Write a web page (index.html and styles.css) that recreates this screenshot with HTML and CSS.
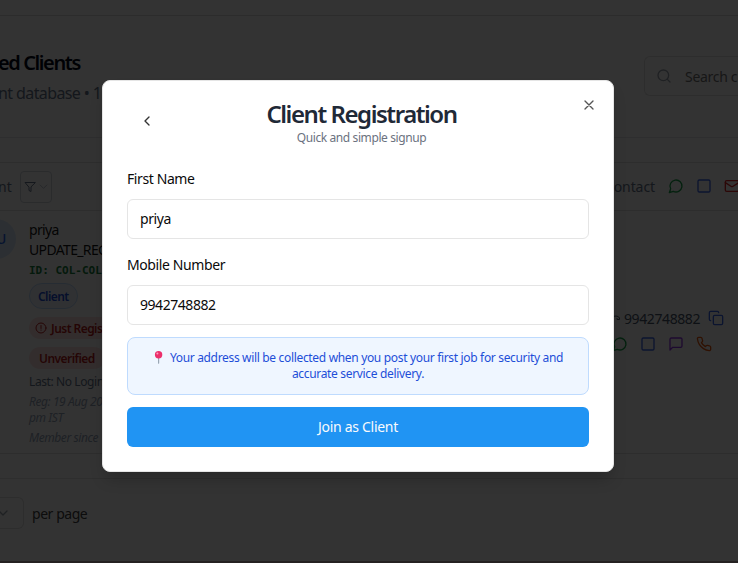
FILE: index.html
```html
<!DOCTYPE html>
<html lang="en">
<head>
<meta charset="utf-8">
<title>Client Registration</title>
<link rel="stylesheet" href="styles.css">
</head>
<body>
<div class="page">
  <div class="topbar"></div>
  <header class="page-head">
    <div class="heading">
      <h1>ed Clients</h1>
      <p>nt database • 1</p>
    </div>
    <div class="search">
      <svg width="16" height="16" viewBox="0 0 24 24"><circle cx="11" cy="11" r="8"/><path d="m21 21-4.3-4.3"/></svg>
      <span>Search cl</span>
    </div>
  </header>
  <div class="gap"></div>
  <div class="table-head">
    <span class="col-client">nt</span>
    <div class="filter">
      <svg width="12" height="12" viewBox="0 0 24 24"><path d="M22 3H2l8 9.46V19l4 2v-8.54z"/></svg>
      <svg class="faint" width="9" height="9" viewBox="0 0 24 24"><path d="m3 8 9 9 9-9"/></svg>
    </div>
    <div class="head-contact">
      <span>Contact</span>
      <svg class="green" width="16" height="16" viewBox="0 0 24 24"><path d="M7.9 20A9 9 0 1 0 4 16.1L2 22Z"/></svg>
      <svg class="blue" width="16" height="16" viewBox="0 0 24 24"><rect x="3" y="3" width="18" height="18" rx="2"/></svg>
      <svg class="red" width="16" height="16" viewBox="0 0 24 24"><rect x="2" y="4" width="20" height="16" rx="2"/><path d="m22 7-8.97 5.7a1.94 1.94 0 0 1-2.06 0L2 7"/></svg>
    </div>
  </div>
  <div class="row">
    <div class="avatar">U</div>
    <div class="client">
      <div class="name">priya</div>
      <div class="name">UPDATE_REG</div>
      <div class="cid">ID: COL-COL</div>
      <span class="tag tag-blue">Client</span>
      <span class="tag tag-red"><svg width="12" height="12" viewBox="0 0 24 24"><circle cx="12" cy="12" r="10"/><path d="M12 7v6M12 16v.5"/></svg>Just Registered</span>
      <span class="tag tag-red tag-wide">Unverified</span>
      <div class="last">Last: No Login</div>
      <div class="reg">Reg: 19 Aug 2025<br>pm IST</div>
      <div class="member">Member since</div>
    </div>
    <div class="contact">
      <div class="phone">
        <svg class="handset" width="9" height="8" viewBox="0 0 9 8"><path d="M1 2.5q5-1.500 6.500 1.500v1.500H5V4.500"/></svg>
        <span>9942748882</span>
        <svg class="blue strong" width="16" height="16" viewBox="0 0 24 24"><rect x="8" y="8" width="14" height="14" rx="2"/><path d="M4 16c-1.1 0-2-.9-2-2V4c0-1.1.9-2 2-2h10c1.1 0 2 .9 2 2"/></svg>
      </div>
      <div class="actions">
        <svg class="green" width="16" height="16" viewBox="0 0 24 24"><path d="M7.9 20A9 9 0 1 0 4 16.1L2 22Z"/></svg>
        <svg class="blue" width="16" height="16" viewBox="0 0 24 24"><rect x="3" y="3" width="18" height="18" rx="2"/></svg>
        <svg class="purple" width="16" height="16" viewBox="0 0 24 24"><path d="M21 15a2 2 0 0 1-2 2H7l-4 4V5a2 2 0 0 1 2-2h14a2 2 0 0 1 2 2z"/></svg>
        <svg class="orange" width="16" height="16" viewBox="0 0 24 24"><path d="M22 16.92v3a2 2 0 0 1-2.18 2 19.79 19.79 0 0 1-8.63-3.07 19.5 19.5 0 0 1-6-6 19.79 19.79 0 0 1-3.07-8.67A2 2 0 0 1 4.11 2h3a2 2 0 0 1 2 1.72c.13.96.36 1.9.7 2.81a2 2 0 0 1-.45 2.11L8.09 9.91a16 16 0 0 0 6 6l1.27-1.27a2 2 0 0 1 2.11-.45c.91.34 1.85.57 2.81.7A2 2 0 0 1 22 16.92z"/></svg>
      </div>
    </div>
  </div>
  <div class="gap"></div>
  <div class="pager">
    <div class="select"><svg width="16" height="16" viewBox="0 0 24 24"><path d="m6 9 6 6 6-6"/></svg></div>
    <span>per page</span>
  </div>
</div>

<div class="overlay">
  <div class="modal">
    <button class="back" aria-label="Back"><svg width="16" height="16" viewBox="0 0 24 24"><path d="m15 18-6-6 6-6"/></svg></button>
    <button class="close" aria-label="Close"><svg width="16" height="16" viewBox="0 0 24 24"><path d="M18 6 6 18M6 6l12 12"/></svg></button>
    <h2><span>Client Registration</span></h2>
    <p class="sub"><span>Quick and simple signup</span></p>
    <label class="label-first">First Name</label>
    <div class="field">priya</div>
    <label class="label-mobile">Mobile Number</label>
    <div class="field number">9942748882</div>
    <div class="note">
      <div><svg class="pin" width="11" height="13" viewBox="0 0 11 13"><path d="M5 6h1.2v6.2L5.6 13 5 12.2z" fill="#9aa7b4"/><circle cx="5.6" cy="3.8" r="3.7" fill="#ec2f6b"/><circle cx="4.4" cy="2.5" r="1" fill="#ff9fc0"/></svg><span>Your address will be collected when you post your first job for security and</span></div>
      <div>accurate service delivery.</div>
    </div>
    <button class="join"><span>Join as Client</span></button>
  </div>
</div>
</body>
</html>
```
FILE: styles.css
```css
* { box-sizing: border-box; }
body {
  margin: 0;
  width: 738px;
  height: 563px;
  overflow: hidden;
  font-family: "Noto Sans", "Open Sans", sans-serif;
  font-size: 14px;
  color: #0a0a0a;
}
h1, h2, p { margin: 0; }
button { font: inherit; border: 0; background: none; padding: 0; }
svg { fill: none; stroke: currentColor; stroke-width: 2; stroke-linecap: round; stroke-linejoin: round; flex: none; }

.page { width: 738px; height: 563px; overflow: hidden; background: #fff; white-space: nowrap; border-bottom: 2px solid #b9a9a9; }
.topbar { height: 16px; border-bottom: 1px solid #dcdcdc; }
.page-head { height: 122px; border-bottom: 1px solid #e5e7eb; display: flex; justify-content: space-between; }
.heading { padding-top: 33px; margin-left: -2px; }
.heading h1 { font-size: 20px; line-height: 28px; font-weight: 600; letter-spacing: -1.4px; color: #020817; }
.heading p { font-size: 16px; line-height: 24px; margin-top: 4px; letter-spacing: -0.6px; color: #64748b; }
.search { flex: none; width: 94px; height: 40px; margin-top: 40px; border: 1px solid #e0e0e0; border-right: 0; border-radius: 6px 0 0 6px; padding-left: 11px; display: flex; align-items: center; gap: 13px; color: #737373; letter-spacing: -0.3px; overflow: hidden; }
.search svg { color: #9ca3af; }
.gap { height: 24px; }
.table-head { height: 49px; border-top: 1px solid #dedede; border-bottom: 1px solid #dedede; display: flex; align-items: center; color: #64748b; }
.col-client { width: 20px; flex: none; margin-left: -2px; margin-right: 2px; }
.filter { flex: none; width: 32px; height: 32px; border: 1px solid #cfd4dc; border-radius: 4px; display: flex; align-items: center; justify-content: center; gap: 3px; }
.filter .faint { opacity: .55; }
.head-contact { flex: none; margin-left: 553px; padding-bottom: 1px; display: flex; align-items: center; gap: 12px; }
.head-contact span { width: 51px; letter-spacing: -0.1px; }
.green { color: #16a34a; }
.blue { color: #3b64e8; }
.red { color: #dc2626; }
.purple { color: #9333ea; }
.orange { color: #ea580c; }

.row { height: 243px; border-bottom: 1px solid #dedede; display: flex; }
.avatar { flex: none; width: 40px; height: 40px; margin: 8px 13px 0 -24px; border-radius: 50%; background: #dbeafe; color: #2563eb; font-weight: 500; line-height: 40px; padding-left: 20px; }
.client { flex: none; width: 584px; padding-top: 9px; display: flex; flex-direction: column; align-items: flex-start; }
.name { line-height: 20px; letter-spacing: -0.65px; color: #171717; }
.cid { font: bold 11px/20px "DejaVu Sans Mono", monospace; padding-top: 1px; color: #15803d; }
.tag { display: flex; align-items: center; gap: 4px; font-size: 12px; font-weight: 600; letter-spacing: -0.55px; border-radius: 13px; }
.tag-blue { height: 26px; margin-top: 2px; padding: 0 8px; border: 1px solid #bfdbfe; background: #eff6ff; color: #1d4ed8; }
.tag-red { height: 22px; margin-top: 8px; padding: 0 6px; background: #fee2e2; color: #b91c1c; }
.tag-wide { padding: 0 10px; }
.last { font-size: 12px; line-height: 16px; margin-top: 5px; letter-spacing: -0.4px; color: #64748b; }
.reg, .member { font-size: 12px; line-height: 16px; font-style: italic; letter-spacing: -0.42px; color: #94a3b8; }
.reg { margin-top: 4px; }
.member { margin-top: 4px; }
.contact { padding-top: 97px; margin-left: -1px; }
.phone { display: flex; align-items: center; height: 20px; color: #475569; }
.phone span { width: 84px; letter-spacing: -0.4px; }
.handset { margin-right: 3px; stroke-width: 1; }
.actions { display: flex; gap: 12px; margin-top: 8px; }
.pager { border-top: 1px solid #e5e5e5; padding-top: 18px; display: flex; align-items: center; gap: 9px; color: #404040; letter-spacing: -0.45px; }
.select { width: 24px; height: 32px; border: 1px solid #dedede; border-left: 0; border-radius: 0 6px 6px 0; display: flex; align-items: center; color: #9ca3af; margin-right: -1px; }
.select svg { margin-left: -5px; }

.overlay { position: absolute; inset: 0; background: rgba(0, 0, 0, .8); }
.modal { position: absolute; left: 102px; top: 80px; width: 512px; height: 392px; padding: 19px 24px 24px; background: #fff; border: 1px solid #e5e5e5; border-radius: 8px; box-shadow: 0 10px 15px -3px rgba(0, 0, 0, .2); display: flex; flex-direction: column; white-space: nowrap; }
.back, .close { position: absolute; width: 16px; height: 16px; display: flex; color: #333; }
.back { left: 36px; top: 32px; }
.close { right: 16px; top: 16px; color: #555; }
.modal h2 { height: 30px; line-height: 28px; font-size: 24px; font-weight: 600; letter-spacing: -1.45px; color: #1f2937; display: flex; justify-content: center; padding-left: 7px; }
.sub { height: 16px; line-height: 16px; font-size: 12px; color: #6b7280; letter-spacing: -0.4px; display: flex; justify-content: center; padding-left: 7px; }
.modal label { line-height: 20px; letter-spacing: -0.4px; }
.label-first { margin-top: 23px; }
.label-mobile { margin-top: 16px; }
.field { flex: none; height: 40px; margin-top: 10px; border: 1px solid #e5e5e5; border-radius: 6px; padding: 0 12px; line-height: 38px; letter-spacing: -0.4px; }
.number { letter-spacing: -0.45px; }
.note { height: 58px; margin-top: 12px; border: 1px solid #bfdbfe; border-radius: 8px; background: #eff6ff; padding-top: 12px; font-size: 12px; line-height: 16px; text-align: center; color: #1d4ed8; letter-spacing: -0.33px; }
.pin { stroke: none; margin-right: 6px; vertical-align: -2px; }
.join { height: 40px; margin-top: 12px; border-radius: 6px; background: #2094f3; color: #f8fafc; line-height: 40px; letter-spacing: -0.3px; }
```
